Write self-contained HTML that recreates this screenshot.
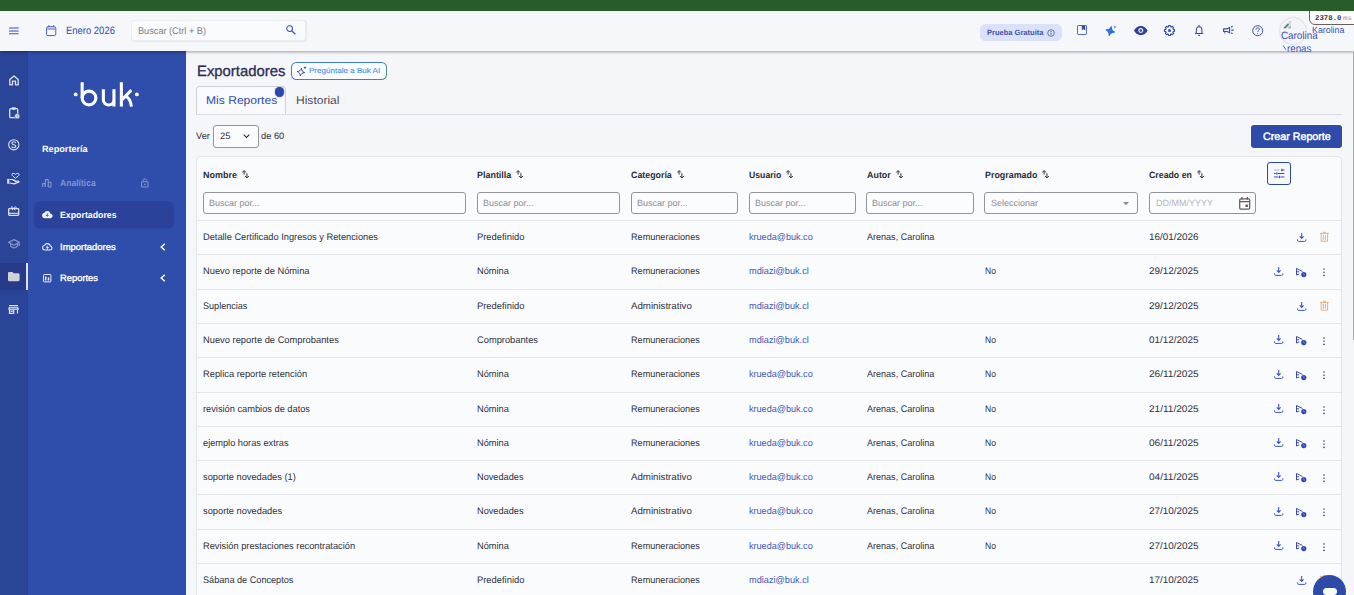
<!DOCTYPE html>
<html lang="es">
<head>
<meta charset="utf-8">
<title>Exportadores</title>
<style>
*{box-sizing:border-box;margin:0;padding:0}
html,body{width:1354px;height:595px;overflow:hidden;background:#f5f6f9;font-family:"Liberation Sans",sans-serif;}
body{position:relative;color:#2b2d42}
.abs{position:absolute}
svg{overflow:visible}
.t{position:absolute;white-space:nowrap;line-height:1;transform-origin:0 50%;z-index:8;text-rendering:geometricPrecision}
svg.abs{z-index:6}
#green{left:0;top:0;width:1354px;height:10.600px;background:#275c2b;z-index:7}
#hdr{left:0;top:10px;width:1354px;height:41px;background:#f6f7fa;box-shadow:0 1px 3px rgba(0,0,0,.38);z-index:5}
#strip{left:0;top:51px;width:28px;height:544px;background:#2a4497;border-right:1px solid #294295}
#stripact{left:0;top:263px;width:28px;height:27.400px;background:#263c8b;border-right:2px solid #e3e1de}
#menu{left:28px;top:51px;width:157.800px;height:544px;background:#2f4daa}
#act{left:34.300px;top:200.800px;width:139.700px;height:28.600px;border-radius:6px;background:#2a429a}
#search{left:131px;top:20px;width:174.600px;height:21.400px;border:1px solid #ecedf2;border-radius:3px;background:#f9fafc;box-shadow:0.500px 0.500px 0.800px rgba(0,0,0,.06);z-index:6}
#pill{left:980.100px;top:24px;width:82px;height:16.900px;border-radius:5.500px;background:#dae1f9;z-index:6}
#avatar{left:1279.800px;top:17.500px;width:26.600px;height:26.600px;border-radius:50%;background:#f4f5f9;box-shadow:0 0 2px rgba(0,0,0,.28);z-index:6}
#ms{left:1309.300px;top:9px;width:50px;height:15.900px;background:#fff;border:1px solid #6f5c5c;border-bottom-left-radius:6px;z-index:6}
#aibtn{left:291.100px;top:62px;width:95.800px;height:17.600px;border-radius:5.500px;background:linear-gradient(120deg,#3a7be0 0%,#3a7be0 82%,#4c9560 100%)}
#aibtn i{position:absolute;left:1px;top:1px;right:1px;bottom:1px;border-radius:4.600px;background:#fbfcff}
#tab{left:196px;top:86px;width:90px;height:29px;border:1px solid #cfd1d8;border-bottom:none;border-radius:4px 4px 0 0;background:#f9fafd}
#tabline{left:196px;top:113.800px;width:1146px;height:1px;background:#dcdee5}
#dot{left:274.900px;top:87.200px;width:9.400px;height:9.400px;border-radius:50%;background:#2c48a8;box-shadow:0 0 1.500px rgba(44,72,168,.6)}
#sel{left:213.400px;top:124.800px;width:45.400px;height:22.800px;border:1px solid #96979e;border-radius:3px;background:#fbfcfe}
#crear{left:1251px;top:124.800px;width:91px;height:23.300px;border-radius:3px;background:#2e4ba9;box-shadow:0 0 0 1px rgba(255,255,255,.75)}
#card{left:196px;top:156px;width:1146px;height:470px;border:1px solid #e4e5e9;border-radius:4.500px;background:#fafbfd}
#tune{left:1267.200px;top:162px;width:23.800px;height:22.800px;border:1.100px solid #2c48a8;border-radius:3px;background:#f6f7fb}
.hl{position:absolute;left:197px;width:1144px;height:1px;background:#e5e6ea}
.inp{position:absolute;top:192.200px;height:21.400px;border:1px solid #939499;border-radius:3px;background:#fbfcfe}
#chat{left:1313px;top:575px;width:33px;height:33px;border-radius:50%;background:#2e4ba9;z-index:9}
#thumb{left:1352.500px;top:52px;width:1.500px;height:288px;background:#a4a9a6;z-index:4}
#chatb{left:1323.100px;top:587.500px;width:13.600px;height:7px;border-radius:3.500px;background:#fff;z-index:10}
</style>
</head>
<body>
<div id="green" class="abs"></div>
<div id="strip" class="abs"></div>
<div id="stripact" class="abs"></div>
<div id="menu" class="abs"></div>
<div id="act" class="abs"></div>
<div id="hdr" class="abs"></div>
<div id="search" class="abs"></div>
<div id="pill" class="abs"></div>
<div id="avatar" class="abs"></div>
<div id="ms" class="abs"></div>
<div id="aibtn" class="abs"><i></i></div>
<div id="tab" class="abs"></div>
<div id="tabline" class="abs"></div>
<div id="dot" class="abs"></div>
<div id="sel" class="abs"></div>
<div id="crear" class="abs"></div>
<div id="card" class="abs"></div>
<div id="tune" class="abs"></div>
<div class="hl" style="top:220px"></div>
<div class="hl" style="top:254px"></div>
<div class="hl" style="top:289px"></div>
<div class="hl" style="top:323px"></div>
<div class="hl" style="top:357px"></div>
<div class="hl" style="top:392px"></div>
<div class="hl" style="top:426px"></div>
<div class="hl" style="top:460px"></div>
<div class="hl" style="top:494px"></div>
<div class="hl" style="top:529px"></div>
<div class="hl" style="top:563px"></div>

<div class="inp" style="left:203.2px;width:262.6px"></div>
<div class="inp" style="left:477px;width:142.8px"></div>
<div class="inp" style="left:631.2px;width:106.5px"></div>
<div class="inp" style="left:749.1px;width:106.7px"></div>
<div class="inp" style="left:866.3px;width:107.3px"></div>
<div class="inp" style="left:984.2px;width:153.5px"></div>
<div class="inp" style="left:1149.2px;width:106.5px"></div>

<svg class="abs" style="left:60px;top:70px" width="90" height="50" viewBox="60 70 90 50"><g fill="none" stroke="#fff" stroke-width="3.100"><path d="M82.150 82.200V98"/><circle cx="89" cy="98" r="6.850"/><path d="M103.350 89.200V99.750A5.300 5.300 0 0 0 113.950 99.750M113.950 89.200V106.600"/><path d="M121.350 82.200V106.600"/><path d="M122 99.800L131.300 90.100" stroke-width="3"/><path d="M125.600 96.300Q130.500 98 131.400 106.600" stroke-width="3"/></g><circle cx="75.700" cy="94.400" r="1.900" fill="#fff"/><circle cx="136.900" cy="94.400" r="1.900" fill="#fff"/></svg>
<svg class="abs" style="left:1283px;top:21.400px" width="8" height="7.600" viewBox="0 0 8 7.600"><path d="M0.300 7.300L5.600 1.200 7.600 0.400V7.300z" fill="#cfe0f3"/><path d="M0.300 7.300l4.600-5 1.200 1.200-3.600 3.800z" fill="#4a8a4f"/><path d="M5.200 7.300l2.400-2.400V7.300z" fill="#8c8c90"/><path d="M5.600 0.400h2v2" fill="none" stroke="#b6b8c0" stroke-width="0.500"/></svg>
<svg class="abs" style="left:1282px;top:44px" width="6" height="8" viewBox="0 0 6 8"><path d="M1.300 1.500L3.900 5.800" stroke="#3b55b3" stroke-width="0.900" fill="none"/></svg>
<span class="t" style="left:66.3px;top:26px;font-size:10.6px;font-weight:normal;color:#2f4daa;transform:scaleX(0.8926);">Enero 2026</span>
<span class="t" style="left:137.5px;top:27px;font-size:9.7px;font-weight:normal;color:#807e86;transform:scaleX(0.9461);">Buscar (Ctrl + B)</span>
<span class="t" style="left:986.8px;top:29px;font-size:7.6px;font-weight:bold;color:#3d55b0;transform:scaleX(0.9900);">Prueba Gratuita</span>
<span class="t" style="left:1311.7px;top:26px;font-size:9.1px;font-weight:normal;color:#3d58b0;transform:scaleX(0.9708);">Karolina</span>
<span class="t" style="left:1280.9px;top:31px;font-size:10.6px;font-weight:normal;color:#3b55b3;transform:scaleX(0.9277);">Carolina</span>
<span class="t" style="left:1286.8px;top:44px;font-size:10.6px;font-weight:normal;color:#3b55b3;transform:scaleX(0.9208);">renas</span>
<span class="t" style="left:1314.9px;top:16px;font-size:7.3px;font-weight:bold;color:#3a3436;transform:scaleX(1.0083);font-family:'Liberation Mono',monospace;">2378.0</span>
<span class="t" style="left:1343.1px;top:16px;font-size:6.6px;font-weight:normal;color:#9a9294;transform:scaleX(1.1235);font-family:'Liberation Mono',monospace;">ms</span>
<span class="t" style="left:41.7px;top:145px;font-size:9.2px;font-weight:bold;color:#ffffff;transform:scaleX(0.9945);">Reportería</span>
<span class="t" style="left:60.3px;top:179px;font-size:9.2px;font-weight:bold;color:#8294d2;transform:scaleX(0.9322);">Analítica</span>
<span class="t" style="left:60.3px;top:211px;font-size:9.2px;font-weight:bold;color:#ffffff;transform:scaleX(0.9555);">Exportadores</span>
<span class="t" style="left:60.3px;top:243px;font-size:9.2px;font-weight:normal;color:#ffffff;transform:scaleX(1.0288);-webkit-text-stroke:0.35px #fff;">Importadores</span>
<span class="t" style="left:60.3px;top:274px;font-size:9.2px;font-weight:normal;color:#ffffff;transform:scaleX(1.0193);-webkit-text-stroke:0.35px #fff;">Reportes</span>
<span class="t" style="left:196.8px;top:65px;font-size:14.9px;font-weight:normal;color:#2b2c56;transform:scaleX(0.9980);-webkit-text-stroke:0.3px #2b2c56;">Exportadores</span>
<span class="t" style="left:308.9px;top:67px;font-size:7.3px;font-weight:normal;color:#4a96ec;transform:scaleX(1.1039);-webkit-text-stroke:0.15px #4a96ec;">Pregúntale a Buk AI</span>
<span class="t" style="left:205.8px;top:96px;font-size:11.3px;font-weight:normal;color:#2f4daa;transform:scaleX(1.0699);">Mis Reportes</span>
<span class="t" style="left:295.7px;top:96px;font-size:11.3px;font-weight:normal;color:#4b4c57;transform:scaleX(1.0658);">Historial</span>
<span class="t" style="left:196.4px;top:131px;font-size:9.4px;font-weight:normal;color:#2f3140;transform:scaleX(0.9873);">Ver</span>
<span class="t" style="left:219.8px;top:131px;font-size:9.4px;font-weight:normal;color:#2f3140;transform:scaleX(1.0060);">25</span>
<span class="t" style="left:261.2px;top:131px;font-size:9.4px;font-weight:normal;color:#2f3140;transform:scaleX(0.9928);">de 60</span>
<span class="t" style="left:1263.1px;top:132px;font-size:10.8px;font-weight:normal;color:#ffffff;transform:scaleX(0.9909);-webkit-text-stroke:0.45px #fff;">Crear Reporte</span>
<span class="t" style="left:203.2px;top:171px;font-size:9.2px;font-weight:bold;color:#2b2d38;transform:scaleX(0.9764);">Nombre</span>
<span class="t" style="left:476.6px;top:171px;font-size:9.2px;font-weight:bold;color:#2b2d38;transform:scaleX(0.9735);">Plantilla</span>
<span class="t" style="left:631.3px;top:171px;font-size:9.2px;font-weight:bold;color:#2b2d38;transform:scaleX(0.9625);">Categoría</span>
<span class="t" style="left:749.1px;top:171px;font-size:9.2px;font-weight:bold;color:#2b2d38;transform:scaleX(0.9439);">Usuario</span>
<span class="t" style="left:867.0px;top:171px;font-size:9.2px;font-weight:bold;color:#2b2d38;transform:scaleX(0.9714);">Autor</span>
<span class="t" style="left:984.5px;top:171px;font-size:9.2px;font-weight:bold;color:#2b2d38;transform:scaleX(0.9681);">Programado</span>
<span class="t" style="left:1149.2px;top:171px;font-size:9.2px;font-weight:bold;color:#2b2d38;transform:scaleX(0.9547);">Creado en</span>
<span class="t" style="left:208.8px;top:199px;font-size:9.0px;font-weight:normal;color:#8c8a92;transform:scaleX(1.0014);">Buscar por...</span>
<span class="t" style="left:482.6px;top:199px;font-size:9.0px;font-weight:normal;color:#8c8a92;transform:scaleX(1.0014);">Buscar por...</span>
<span class="t" style="left:636.8px;top:199px;font-size:9.0px;font-weight:normal;color:#8c8a92;transform:scaleX(1.0014);">Buscar por...</span>
<span class="t" style="left:754.7px;top:199px;font-size:9.0px;font-weight:normal;color:#8c8a92;transform:scaleX(1.0014);">Buscar por...</span>
<span class="t" style="left:872.2px;top:199px;font-size:9.0px;font-weight:normal;color:#8c8a92;transform:scaleX(1.0014);">Buscar por...</span>
<span class="t" style="left:990.9px;top:199px;font-size:9.0px;font-weight:normal;color:#8c8a92;transform:scaleX(0.9972);">Seleccionar</span>
<span class="t" style="left:1155.8px;top:199px;font-size:9.0px;font-weight:normal;color:#b4b5bd;transform:scaleX(0.9980);">DD/MM/YYYY</span>
<span class="t" style="left:202.8px;top:233px;font-size:9.5px;font-weight:normal;color:#2f3140;transform:scaleX(0.9747);">Detalle Certificado Ingresos y Retenciones</span>
<span class="t" style="left:476.6px;top:233px;font-size:9.5px;font-weight:normal;color:#2f3140;transform:scaleX(0.9862);">Predefinido</span>
<span class="t" style="left:631.2px;top:233px;font-size:9.5px;font-weight:normal;color:#2f3140;transform:scaleX(0.9578);">Remuneraciones</span>
<span class="t" style="left:749.1px;top:233px;font-size:9.5px;font-weight:normal;color:#3d59b6;transform:scaleX(0.9552);">krueda@buk.co</span>
<span class="t" style="left:867.0px;top:233px;font-size:9.5px;font-weight:normal;color:#2f3140;transform:scaleX(0.9510);">Arenas, Carolina</span>
<span class="t" style="left:1149.2px;top:233px;font-size:9.5px;font-weight:normal;color:#2f3140;transform:scaleX(1.0432);">16/01/2026</span>
<span class="t" style="left:202.8px;top:267px;font-size:9.5px;font-weight:normal;color:#2f3140;transform:scaleX(0.9789);">Nuevo reporte de Nómina</span>
<span class="t" style="left:476.6px;top:267px;font-size:9.5px;font-weight:normal;color:#2f3140;transform:scaleX(0.9710);">Nómina</span>
<span class="t" style="left:631.2px;top:267px;font-size:9.5px;font-weight:normal;color:#2f3140;transform:scaleX(0.9578);">Remuneraciones</span>
<span class="t" style="left:749.1px;top:267px;font-size:9.5px;font-weight:normal;color:#3d59b6;transform:scaleX(0.9657);">mdiazi@buk.cl</span>
<span class="t" style="left:984.7px;top:267px;font-size:9.5px;font-weight:normal;color:#2f3140;transform:scaleX(0.8967);">No</span>
<span class="t" style="left:1149.2px;top:267px;font-size:9.5px;font-weight:normal;color:#2f3140;transform:scaleX(1.0432);">29/12/2025</span>
<span class="t" style="left:202.8px;top:302px;font-size:9.5px;font-weight:normal;color:#2f3140;transform:scaleX(0.9552);">Suplencias</span>
<span class="t" style="left:476.6px;top:302px;font-size:9.5px;font-weight:normal;color:#2f3140;transform:scaleX(0.9862);">Predefinido</span>
<span class="t" style="left:631.2px;top:302px;font-size:9.5px;font-weight:normal;color:#2f3140;transform:scaleX(1.0189);">Administrativo</span>
<span class="t" style="left:749.1px;top:302px;font-size:9.5px;font-weight:normal;color:#3d59b6;transform:scaleX(0.9657);">mdiazi@buk.cl</span>
<span class="t" style="left:1149.2px;top:302px;font-size:9.5px;font-weight:normal;color:#2f3140;transform:scaleX(1.0432);">29/12/2025</span>
<span class="t" style="left:202.8px;top:336px;font-size:9.5px;font-weight:normal;color:#2f3140;transform:scaleX(0.9815);">Nuevo reporte de Comprobantes</span>
<span class="t" style="left:476.6px;top:336px;font-size:9.5px;font-weight:normal;color:#2f3140;transform:scaleX(0.9789);">Comprobantes</span>
<span class="t" style="left:631.2px;top:336px;font-size:9.5px;font-weight:normal;color:#2f3140;transform:scaleX(0.9578);">Remuneraciones</span>
<span class="t" style="left:749.1px;top:336px;font-size:9.5px;font-weight:normal;color:#3d59b6;transform:scaleX(0.9657);">mdiazi@buk.cl</span>
<span class="t" style="left:984.7px;top:336px;font-size:9.5px;font-weight:normal;color:#2f3140;transform:scaleX(0.8967);">No</span>
<span class="t" style="left:1149.2px;top:336px;font-size:9.5px;font-weight:normal;color:#2f3140;transform:scaleX(1.0432);">01/12/2025</span>
<span class="t" style="left:202.8px;top:370px;font-size:9.5px;font-weight:normal;color:#2f3140;transform:scaleX(0.9806);">Replica reporte retención</span>
<span class="t" style="left:476.6px;top:370px;font-size:9.5px;font-weight:normal;color:#2f3140;transform:scaleX(0.9710);">Nómina</span>
<span class="t" style="left:631.2px;top:370px;font-size:9.5px;font-weight:normal;color:#2f3140;transform:scaleX(0.9578);">Remuneraciones</span>
<span class="t" style="left:749.1px;top:370px;font-size:9.5px;font-weight:normal;color:#3d59b6;transform:scaleX(0.9552);">krueda@buk.co</span>
<span class="t" style="left:867.0px;top:370px;font-size:9.5px;font-weight:normal;color:#2f3140;transform:scaleX(0.9510);">Arenas, Carolina</span>
<span class="t" style="left:984.7px;top:370px;font-size:9.5px;font-weight:normal;color:#2f3140;transform:scaleX(0.8967);">No</span>
<span class="t" style="left:1149.2px;top:370px;font-size:9.5px;font-weight:normal;color:#2f3140;transform:scaleX(1.0588);">26/11/2025</span>
<span class="t" style="left:202.8px;top:405px;font-size:9.5px;font-weight:normal;color:#2f3140;transform:scaleX(0.9741);">revisión cambios de datos</span>
<span class="t" style="left:476.6px;top:405px;font-size:9.5px;font-weight:normal;color:#2f3140;transform:scaleX(0.9710);">Nómina</span>
<span class="t" style="left:631.2px;top:405px;font-size:9.5px;font-weight:normal;color:#2f3140;transform:scaleX(0.9578);">Remuneraciones</span>
<span class="t" style="left:749.1px;top:405px;font-size:9.5px;font-weight:normal;color:#3d59b6;transform:scaleX(0.9552);">krueda@buk.co</span>
<span class="t" style="left:867.0px;top:405px;font-size:9.5px;font-weight:normal;color:#2f3140;transform:scaleX(0.9510);">Arenas, Carolina</span>
<span class="t" style="left:984.7px;top:405px;font-size:9.5px;font-weight:normal;color:#2f3140;transform:scaleX(0.8967);">No</span>
<span class="t" style="left:1149.2px;top:405px;font-size:9.5px;font-weight:normal;color:#2f3140;transform:scaleX(1.0588);">21/11/2025</span>
<span class="t" style="left:202.8px;top:439px;font-size:9.5px;font-weight:normal;color:#2f3140;transform:scaleX(0.9707);">ejemplo horas extras</span>
<span class="t" style="left:476.6px;top:439px;font-size:9.5px;font-weight:normal;color:#2f3140;transform:scaleX(0.9710);">Nómina</span>
<span class="t" style="left:631.2px;top:439px;font-size:9.5px;font-weight:normal;color:#2f3140;transform:scaleX(0.9578);">Remuneraciones</span>
<span class="t" style="left:749.1px;top:439px;font-size:9.5px;font-weight:normal;color:#3d59b6;transform:scaleX(0.9552);">krueda@buk.co</span>
<span class="t" style="left:867.0px;top:439px;font-size:9.5px;font-weight:normal;color:#2f3140;transform:scaleX(0.9510);">Arenas, Carolina</span>
<span class="t" style="left:984.7px;top:439px;font-size:9.5px;font-weight:normal;color:#2f3140;transform:scaleX(0.8967);">No</span>
<span class="t" style="left:1149.2px;top:439px;font-size:9.5px;font-weight:normal;color:#2f3140;transform:scaleX(1.0588);">06/11/2025</span>
<span class="t" style="left:202.8px;top:473px;font-size:9.5px;font-weight:normal;color:#2f3140;transform:scaleX(0.9762);">soporte novedades (1)</span>
<span class="t" style="left:476.6px;top:473px;font-size:9.5px;font-weight:normal;color:#2f3140;transform:scaleX(0.9675);">Novedades</span>
<span class="t" style="left:631.2px;top:473px;font-size:9.5px;font-weight:normal;color:#2f3140;transform:scaleX(1.0189);">Administrativo</span>
<span class="t" style="left:749.1px;top:473px;font-size:9.5px;font-weight:normal;color:#3d59b6;transform:scaleX(0.9552);">krueda@buk.co</span>
<span class="t" style="left:867.0px;top:473px;font-size:9.5px;font-weight:normal;color:#2f3140;transform:scaleX(0.9510);">Arenas, Carolina</span>
<span class="t" style="left:984.7px;top:473px;font-size:9.5px;font-weight:normal;color:#2f3140;transform:scaleX(0.8967);">No</span>
<span class="t" style="left:1149.2px;top:473px;font-size:9.5px;font-weight:normal;color:#2f3140;transform:scaleX(1.0588);">04/11/2025</span>
<span class="t" style="left:202.8px;top:507px;font-size:9.5px;font-weight:normal;color:#2f3140;transform:scaleX(0.9788);">soporte novedades</span>
<span class="t" style="left:476.6px;top:507px;font-size:9.5px;font-weight:normal;color:#2f3140;transform:scaleX(0.9675);">Novedades</span>
<span class="t" style="left:631.2px;top:507px;font-size:9.5px;font-weight:normal;color:#2f3140;transform:scaleX(1.0189);">Administrativo</span>
<span class="t" style="left:749.1px;top:507px;font-size:9.5px;font-weight:normal;color:#3d59b6;transform:scaleX(0.9552);">krueda@buk.co</span>
<span class="t" style="left:867.0px;top:507px;font-size:9.5px;font-weight:normal;color:#2f3140;transform:scaleX(0.9510);">Arenas, Carolina</span>
<span class="t" style="left:984.7px;top:507px;font-size:9.5px;font-weight:normal;color:#2f3140;transform:scaleX(0.8967);">No</span>
<span class="t" style="left:1149.2px;top:507px;font-size:9.5px;font-weight:normal;color:#2f3140;transform:scaleX(1.0432);">27/10/2025</span>
<span class="t" style="left:202.8px;top:542px;font-size:9.5px;font-weight:normal;color:#2f3140;transform:scaleX(0.9764);">Revisión prestaciones recontratación</span>
<span class="t" style="left:476.6px;top:542px;font-size:9.5px;font-weight:normal;color:#2f3140;transform:scaleX(0.9710);">Nómina</span>
<span class="t" style="left:631.2px;top:542px;font-size:9.5px;font-weight:normal;color:#2f3140;transform:scaleX(0.9578);">Remuneraciones</span>
<span class="t" style="left:749.1px;top:542px;font-size:9.5px;font-weight:normal;color:#3d59b6;transform:scaleX(0.9552);">krueda@buk.co</span>
<span class="t" style="left:867.0px;top:542px;font-size:9.5px;font-weight:normal;color:#2f3140;transform:scaleX(0.9510);">Arenas, Carolina</span>
<span class="t" style="left:984.7px;top:542px;font-size:9.5px;font-weight:normal;color:#2f3140;transform:scaleX(0.8967);">No</span>
<span class="t" style="left:1149.2px;top:542px;font-size:9.5px;font-weight:normal;color:#2f3140;transform:scaleX(1.0432);">27/10/2025</span>
<span class="t" style="left:202.8px;top:576px;font-size:9.5px;font-weight:normal;color:#2f3140;transform:scaleX(0.9614);">Sábana de Conceptos</span>
<span class="t" style="left:476.6px;top:576px;font-size:9.5px;font-weight:normal;color:#2f3140;transform:scaleX(0.9862);">Predefinido</span>
<span class="t" style="left:631.2px;top:576px;font-size:9.5px;font-weight:normal;color:#2f3140;transform:scaleX(0.9578);">Remuneraciones</span>
<span class="t" style="left:749.1px;top:576px;font-size:9.5px;font-weight:normal;color:#3d59b6;transform:scaleX(0.9657);">mdiazi@buk.cl</span>
<span class="t" style="left:1149.2px;top:576px;font-size:9.5px;font-weight:normal;color:#2f3140;transform:scaleX(1.0432);">17/10/2025</span>

<svg class="abs" style="left:8.9px;top:26.5px;" width="9.6" height="8" viewBox="0 0 9.600 8"><path d="M0 1h9.600M0 4h9.600" stroke="#2f4daa" stroke-width="1" fill="none"/><path d="M0 6.700h9.600" stroke="#5c72bd" stroke-width="1.200" fill="none"/></svg>
<svg class="abs" style="left:45.8px;top:24.8px;" width="10.4" height="11.2" viewBox="0 0 10.400 11.200"><rect x="0.600" y="1.700" width="9.200" height="8.900" rx="1.400" fill="none" stroke="#4560b6" stroke-width="1"/><rect x="1.200" y="2.600" width="8" height="2.400" fill="#a3abd0"/><path d="M2.800 0.200v1.800M7.600 0.200v1.800" stroke="#4560b6" stroke-width="1"/></svg>
<svg class="abs" style="left:285.6px;top:25.4px;" width="10" height="10" viewBox="0 0 10 10"><circle cx="3.600" cy="3.600" r="2.900" fill="none" stroke="#3654bf" stroke-width="1.050"/><path d="M5.700 5.800l3.700 3.400" stroke="#3654bf" stroke-width="1.200"/></svg>
<svg class="abs" style="left:1046.6px;top:28.6px;" width="8" height="8" viewBox="0 0 8 8"><circle cx="4" cy="4" r="3.3" fill="none" stroke="#3d57ae" stroke-width="0.8"/><path d="M4 3.6v2.2" stroke="#3d57ae" stroke-width="0.9"/><circle cx="4" cy="2.4" r="0.5" fill="#3d57ae"/></svg>
<svg class="abs" style="left:1076.8px;top:25.2px;" width="10" height="10" viewBox="0 0 10 10"><rect x="0.500" y="0.500" width="9" height="9" rx="0.700" fill="none" stroke="#3d59b4" stroke-width="0.900"/><path d="M4.800 0.500h3.400v4.800l-1.700-1.100-1.700 1.100z" fill="#3350ad"/></svg>
<svg class="abs" style="left:1105.6px;top:25.4px;" width="11" height="11" viewBox="0 0 11 11"><path d="M4.300 1.800c.4 2.600 1.400 3.700 4.200 4.200-2.800.500-3.800 1.600-4.200 4.400-.5-2.800-1.400-3.900-4.200-4.400C2.900 5.500 3.800 4.400 4.300 1.800z" fill="#2f6ee0" stroke="#2f6ee0" stroke-width="1.300" stroke-linejoin="round" transform="rotate(14 4.300 6)"/><path d="M8.900 0.300c.2 1.200.6 1.600 1.700 1.800-1.100.200-1.500.600-1.700 1.800-.2-1.200-.6-1.600-1.700-1.800 1.100-.2 1.500-.6 1.700-1.800z" fill="#3f86ea"/></svg>
<svg class="abs" style="left:1133.7px;top:26.4px;" width="13.6" height="9.2" viewBox="0 0 13.6 9.2"><path d="M0 4.600C1.500 1.700 3.900 0 6.800 0s5.300 1.700 6.800 4.600C12.100 7.500 9.700 9.200 6.800 9.200S1.500 7.500 0 4.600z" fill="#2a409b"/><circle cx="6.800" cy="4.600" r="2.500" fill="#f6f7fa"/><circle cx="6.800" cy="4.600" r="1.300" fill="#2a409b"/></svg>
<svg class="abs" style="left:1164px;top:25px;" width="11" height="11" viewBox="0 0 11 11"><path d="M4.35 1.77L4.64 0.47L6.36 0.47L6.65 1.77L7.32 2.05L8.44 1.34L9.66 2.56L8.95 3.68L9.23 4.35L10.53 4.64L10.53 6.36L9.23 6.65L8.95 7.32L9.66 8.44L8.44 9.66L7.32 8.95L6.65 9.23L6.36 10.53L4.64 10.53L4.35 9.23L3.68 8.95L2.56 9.66L1.34 8.44L2.05 7.32L1.77 6.65L0.47 6.36L0.47 4.64L1.77 4.35L2.05 3.68L1.34 2.56L2.56 1.34L3.68 2.05z" fill="none" stroke="#2f4daa" stroke-width="1.150" stroke-linejoin="round"/><circle cx="5.500" cy="5.500" r="1.500" fill="#2f4daa"/></svg>
<svg class="abs" style="left:1194.9px;top:24.9px;" width="8.2" height="11.2" viewBox="0 0 8.200 11.200"><path d="M1.300 8.300V5c0-1.900 1.200-3.200 2.800-3.200S6.900 3.100 6.900 5v3.300" fill="none" stroke="#2f4daa" stroke-width="1.050"/><path d="M0 8.500h8.200" stroke="#2f4daa" stroke-width="1.050"/><path d="M4.100 0v1.600" stroke="#2f4daa" stroke-width="1.050"/><path d="M3.200 9.800h1.800v.4a.9.9 0 0 1-1.800 0z" fill="#2f4daa"/></svg>
<svg class="abs" style="left:1222.7px;top:27.4px;" width="11" height="7" viewBox="0 0 11 7"><path d="M0.600 1.900h3.500l2.500-1.300v5.200l-2.500-1.300H0.600z" fill="none" stroke="#2f4daa" stroke-width="1.100" stroke-linejoin="round"/><path d="M1.700 4.900v1.600" stroke="#7d8ac0" stroke-width="1.300"/><path d="M7.900 0.200L9.700 -0.900M8.300 3.100h2.400M7.900 6l1.800 0.500" stroke="#2f4daa" stroke-width="1.100"/></svg>
<svg class="abs" style="left:1252px;top:24.8px;" width="11.4" height="11.4" viewBox="0 0 11.400 11.400"><circle cx="5.700" cy="5.700" r="5" fill="none" stroke="#2f4daa" stroke-width="1"/><path d="M4 4.500c0-1 .7-1.700 1.700-1.700s1.700.6 1.700 1.500c0 1.200-1.600 1.300-1.600 2.600" fill="none" stroke="#2f4daa" stroke-width="1"/><circle cx="5.700" cy="8.500" r="0.600" fill="#2f4daa"/></svg>
<svg class="abs" style="left:8.5px;top:75.25px;opacity:1;" width="10" height="10.5" viewBox="0 0 10 10.500"><path d="M0.800 4.600L5 0.900l4.200 3.700V9.800H6.500V6.200h-3v3.600H0.800z" fill="none" stroke="#e2e3ec" stroke-width="1.300" stroke-linejoin="round"/></svg>
<svg class="abs" style="left:8.9px;top:107.0px;opacity:1;" width="11" height="12" viewBox="0 0 11 12"><rect x="0.700" y="1.700" width="8" height="9" rx="1" fill="none" stroke="#e2e3ec" stroke-width="1.300"/><rect x="2.700" y="0.300" width="4" height="2.400" rx="0.600" fill="#e2e3ec"/><circle cx="8.200" cy="9.200" r="2.600" fill="#e2e3ec" stroke="#2a4497" stroke-width="0.600"/><path d="M8.200 8v1.300l.8.500" stroke="#2a4497" stroke-width="0.500" fill="none"/></svg>
<svg class="abs" style="left:7.8px;top:139.39999999999998px;opacity:1;" width="11.6" height="11.6" viewBox="0 0 11.600 11.600"><circle cx="5.800" cy="5.800" r="5.100" fill="none" stroke="#e2e3ec" stroke-width="1.100"/><path d="M7.700 4.100c-.3-.9-1-1.300-1.900-1.300-1.100 0-1.900.6-1.900 1.500 0 2.100 3.900 .9 3.900 3 0 .9-.8 1.500-2 1.500-1.100 0-1.900-.5-2.100-1.400" fill="none" stroke="#e2e3ec" stroke-width="1.100"/></svg>
<svg class="abs" style="left:7.3999999999999995px;top:172.8px;opacity:1;" width="12.4" height="11.4" viewBox="0 0 12.400 11.400"><path d="M8.500 5.200C6.500 3.600 4.900 2.700 4.900 1.600 4.900 .2 6.900-.2 8.500 1.400 10.100-.2 12.100 .2 12.100 1.600c0 1.100-1.600 2-3.600 3.600z" fill="none" stroke="#e2e3ec" stroke-width="1"/><rect x="0.200" y="5.900" width="2.100" height="4.800" fill="#e2e3ec"/><path d="M2.600 6.500h3l2.600 1h-2.400M2.600 10l4.600 .9 5-2c-.4-.9-1.300-1-2-.8l-2.600 .7" fill="none" stroke="#e2e3ec" stroke-width="1.200" stroke-linejoin="round"/></svg>
<svg class="abs" style="left:8.100000000000001px;top:206.2px;opacity:1;" width="11.4" height="10" viewBox="0 0 11.400 10"><rect x="0.700" y="2.700" width="10" height="6.600" rx="0.800" fill="none" stroke="#e2e3ec" stroke-width="1.300"/><path d="M0.700 7.300h10" stroke="#e2e3ec" stroke-width="1.100"/><path d="M5.700 2.600C4.600 .2 2.600 .4 3.300 1.900M5.700 2.600C6.800 .2 8.800 .4 8.100 1.900M4 4.200l1.700-1.600 1.700 1.600" fill="none" stroke="#e2e3ec" stroke-width="1"/></svg>
<svg class="abs" style="left:7.699999999999999px;top:238.5px;opacity:0.5;" width="12" height="9.6" viewBox="0 0 12 9.600"><path d="M6 0.600l5.400 2.800L6 6.200 0.600 3.400z" fill="none" stroke="#e2e3ec" stroke-width="1.200" stroke-linejoin="round"/><path d="M2.600 4.800v2.400C3.600 8.400 4.800 8.900 6 8.900s2.400-.5 3.400-1.700V4.800" fill="none" stroke="#e2e3ec" stroke-width="1.200"/><path d="M11.200 3.400v3.600" stroke="#e2e3ec" stroke-width="1.300"/></svg>
<svg class="abs" style="left:7.7px;top:271.7px;opacity:1;" width="11.6" height="9.2" viewBox="0 0 11.600 9.200"><path d="M1.200 0h3.200l1.200 1.300h4.800c.7 0 1.200.5 1.200 1.200V8c0 .7-.5 1.200-1.200 1.200H1.200C.500 9.200 0 8.700 0 8V1.200C0 .500.500 0 1.200 0z" fill="#d0d0d6"/></svg>
<svg class="abs" style="left:8.0px;top:305.0px;opacity:1;" width="11" height="9" viewBox="0 0 11 9"><path d="M1 0.600h9" stroke="#e2e3ec" stroke-width="1.100"/><path d="M0.600 4.100L1.400 2.200h8.200l.8 1.900z" fill="none" stroke="#e2e3ec" stroke-width="1.100" stroke-linejoin="round"/><path d="M1.500 4.300v4.100h4.200V4.300M9.500 4.300v4.300" fill="none" stroke="#e2e3ec" stroke-width="1.200"/><rect x="2.500" y="5.500" width="2.200" height="1.500" fill="#e2e3ec"/></svg>
<svg class="abs" style="left:42.300000000000004px;top:178.6px;opacity:1;" width="9.6" height="8.6" viewBox="0 0 9.600 8.600"><path d="M0.600 8V4.600h2.600V8M3.400 8V0.600h2.800V8M6.400 8V3.200h2.600V8z" fill="none" stroke="#8294d2" stroke-width="1.100" stroke-linejoin="round"/></svg>
<svg class="abs" style="left:141.39999999999998px;top:178.1px;opacity:1;" width="7.6" height="9.6" viewBox="0 0 7.600 9.600"><rect x="0.600" y="3.800" width="6.400" height="5.200" rx="0.800" fill="none" stroke="#8294d2" stroke-width="1.100"/><path d="M2.200 3.800V2.400a1.600 1.600 0 0 1 3.200 0v1.400" fill="none" stroke="#8294d2" stroke-width="1"/><circle cx="3.800" cy="6.400" r="0.800" fill="#8294d2"/></svg>
<svg class="abs" style="left:41.800000000000004px;top:211.0px;opacity:1;" width="10.6" height="7.2" viewBox="0 0 10.600 7.200"><path d="M8.500 2.800C8.200 1.200 6.900 0 5.300 0 4 0 2.900.700 2.400 1.800 1 2 0 3.100 0 4.400 0 5.900 1.200 7.200 2.700 7.200h5.700c1.200 0 2.200-1 2.200-2.200 0-1.200-.9-2.100-2.100-2.200z" fill="#eef0fa"/><path d="M5.300 2.400v2.600M4 4l1.300 1.400L6.600 4" stroke="#2a409a" stroke-width="0.800" fill="none"/></svg>
<svg class="abs" style="left:41.800000000000004px;top:242.79999999999998px;opacity:1;" width="10.6" height="7.6" viewBox="0 0 10.600 7.600"><path d="M8.300 3C8 1.600 6.800 0.600 5.300 0.600 4.100 0.600 3.100 1.300 2.600 2.300 1.400 2.500.600 3.500.600 4.600.600 5.900 1.700 7 3 7h5.200c1 0 1.800-.800 1.800-1.900S9.300 3.100 8.300 3z" fill="none" stroke="#eef0fa" stroke-width="1.100"/><path d="M5.300 6.600V3.600M3.900 4.800l1.400-1.400 1.400 1.400" stroke="#eef0fa" stroke-width="1" fill="none"/></svg>
<svg class="abs" style="left:42.9px;top:273.7px;opacity:1;" width="8.4" height="8.4" viewBox="0 0 8.400 8.400"><rect x="0.500" y="0.500" width="7.400" height="7.400" rx="0.800" fill="none" stroke="#eef0fa" stroke-width="1"/><path d="M2.700 6.600V2.400M5.500 6.600V3.400" stroke="#eef0fa" stroke-width="1.500"/></svg>
<svg class="abs" style="left:159.89999999999998px;top:243.4px;opacity:1;" width="5.6" height="8" viewBox="0 0 5.600 8"><path d="M4.800 0.700L1.200 4l3.600 3.300" fill="none" stroke="#ffffff" stroke-width="1.500"/></svg>
<svg class="abs" style="left:159.89999999999998px;top:274.3px;opacity:1;" width="5.6" height="8" viewBox="0 0 5.600 8"><path d="M4.800 0.700L1.200 4l3.600 3.300" fill="none" stroke="#ffffff" stroke-width="1.500"/></svg>
<svg class="abs" style="left:296.7px;top:66.2px;" width="9.8" height="10.2" viewBox="0 0 9.800 10.200"><path d="M3.900 2.200c.5 2.400 1.400 3.300 3.800 3.900-2.400.6-3.300 1.500-3.800 3.900-.5-2.400-1.400-3.300-3.800-3.900 2.400-.6 3.300-1.500 3.800-3.900z" fill="none" stroke="#2b3a8c" stroke-width="0.900" stroke-linejoin="round" transform="rotate(8 3.900 6.100)"/><path d="M8 0.100c.2 1 .6 1.400 1.600 1.600-1 .2-1.400.6-1.600 1.600-.2-1-.6-1.400-1.600-1.600 1-.2 1.400-.6 1.600-1.600z" fill="#2b3a8c"/></svg>
<svg class="abs" style="left:242.6px;top:134.2px;" width="7" height="4.6" viewBox="0 0 7 4.600"><path d="M0.700 0.700l2.800 2.800 2.800-2.800" fill="none" stroke="#2f3140" stroke-width="1.100"/></svg>
<svg class="abs" style="left:241.79999999999998px;top:170.4px;" width="7.6" height="8.4" viewBox="0 0 7.600 8.400"><path d="M2.100 4.600V0.800M0.300 2.500L2.100 0.600 3.900 2.500" fill="none" stroke="#30313a" stroke-width="1"/><path d="M4.900 3.300V7.800M2.900 6L4.900 8 6.900 6" fill="none" stroke="#30313a" stroke-width="1"/></svg>
<svg class="abs" style="left:516.0px;top:170.4px;" width="7.6" height="8.4" viewBox="0 0 7.600 8.400"><path d="M2.100 4.600V0.800M0.300 2.500L2.100 0.600 3.900 2.500" fill="none" stroke="#30313a" stroke-width="1"/><path d="M4.900 3.300V7.800M2.900 6L4.900 8 6.900 6" fill="none" stroke="#30313a" stroke-width="1"/></svg>
<svg class="abs" style="left:677.0px;top:170.4px;" width="7.6" height="8.4" viewBox="0 0 7.600 8.400"><path d="M2.100 4.600V0.800M0.300 2.500L2.100 0.600 3.900 2.500" fill="none" stroke="#30313a" stroke-width="1"/><path d="M4.900 3.300V7.800M2.900 6L4.900 8 6.900 6" fill="none" stroke="#30313a" stroke-width="1"/></svg>
<svg class="abs" style="left:786.4000000000001px;top:170.4px;" width="7.6" height="8.4" viewBox="0 0 7.600 8.400"><path d="M2.100 4.600V0.800M0.300 2.500L2.100 0.600 3.900 2.500" fill="none" stroke="#30313a" stroke-width="1"/><path d="M4.900 3.300V7.800M2.900 6L4.900 8 6.900 6" fill="none" stroke="#30313a" stroke-width="1"/></svg>
<svg class="abs" style="left:895.9000000000001px;top:170.4px;" width="7.6" height="8.4" viewBox="0 0 7.600 8.400"><path d="M2.100 4.600V0.800M0.300 2.500L2.100 0.600 3.900 2.500" fill="none" stroke="#30313a" stroke-width="1"/><path d="M4.900 3.300V7.800M2.900 6L4.900 8 6.900 6" fill="none" stroke="#30313a" stroke-width="1"/></svg>
<svg class="abs" style="left:1042.4px;top:170.4px;" width="7.6" height="8.4" viewBox="0 0 7.600 8.400"><path d="M2.100 4.600V0.800M0.300 2.500L2.100 0.600 3.900 2.500" fill="none" stroke="#30313a" stroke-width="1"/><path d="M4.900 3.300V7.800M2.900 6L4.900 8 6.900 6" fill="none" stroke="#30313a" stroke-width="1"/></svg>
<svg class="abs" style="left:1197.2px;top:170.4px;" width="7.6" height="8.4" viewBox="0 0 7.600 8.400"><path d="M2.100 4.600V0.800M0.300 2.500L2.100 0.600 3.900 2.500" fill="none" stroke="#30313a" stroke-width="1"/><path d="M4.900 3.300V7.800M2.900 6L4.900 8 6.900 6" fill="none" stroke="#30313a" stroke-width="1"/></svg>
<svg class="abs" style="left:1273.8px;top:168.5px;" width="10.4" height="9.5" viewBox="0 0 10.400 9.500"><path d="M0 1h5.400" stroke="#a9b3e0" stroke-width="1"/><path d="M7.500 1h2.900M0 4.500h1.800M3.700 4.500h6.700M0 8h4.300M6.400 8h4" stroke="#2f4daa" stroke-width="1"/><path d="M7.900 -0.200v2.400M2.900 3.300v2.400M5.400 6.800v2.400" stroke="#2f4daa" stroke-width="1.100"/></svg>
<svg class="abs" style="left:1123px;top:201.6px;" width="6" height="3.2" viewBox="0 0 6 3.200"><path d="M0 0h6L3 3.200z" fill="#8a8c96"/></svg>
<svg class="abs" style="left:1238.9px;top:196.6px;" width="11.4" height="12.8" viewBox="0 0 11.400 12.800"><rect x="0.700" y="1.900" width="10" height="10.200" rx="1" fill="none" stroke="#635a5a" stroke-width="1.250"/><path d="M0.700 4.700h10M3 0.100v2.400M8.400 0.100v2.400" stroke="#635a5a" stroke-width="1.200"/><rect x="6.500" y="7.600" width="2.500" height="2.500" rx="0.700" fill="#635a5a"/></svg>
<svg class="abs" style="left:1297.4px;top:232.9px;" width="9.4" height="9" viewBox="0 0 9.400 9"><path d="M4.700 0v5.300M2.800 3.400l1.900 2 1.900-2" fill="none" stroke="#3a55c4" stroke-width="1.100"/><path d="M0.500 6.400v0.800c0 .800.500 1.200 1.300 1.200h5.800c.800 0 1.300-.400 1.300-1.200v-0.800" fill="none" stroke="#3a55c4" stroke-width="1"/></svg>
<svg class="abs" style="left:1320.1px;top:232.10000000000002px;" width="8.8" height="9.8" viewBox="0 0 8.800 9.800"><path d="M0 1.400h8.800M3 0.400h2.800" stroke="#f0a566" stroke-width="0.900"/><path d="M1.200 1.600v7.600h6.400V1.600" fill="none" stroke="#f0a566" stroke-width="0.900"/><path d="M3.400 3v4.800M5.400 3v4.800" stroke="#f0a566" stroke-width="0.900"/></svg>
<svg class="abs" style="left:1273.6px;top:266.79999999999995px;" width="9.4" height="9" viewBox="0 0 9.400 9"><path d="M4.700 0v5.300M2.800 3.400l1.900 2 1.900-2" fill="none" stroke="#3a55c4" stroke-width="1.100"/><path d="M0.500 6.400v0.800c0 .800.500 1.200 1.300 1.200h5.800c.800 0 1.300-.400 1.300-1.200v-0.800" fill="none" stroke="#3a55c4" stroke-width="1"/></svg>
<svg class="abs" style="left:1296px;top:267.6px;" width="10.4" height="9.2" viewBox="0 0 10.400 9.200"><path d="M0.500 7V0.500l6 3M0.500 3.800h2.600M0.500 7l2.800-1" fill="none" stroke="#2c3a94" stroke-width="0.900" stroke-linejoin="round"/><circle cx="7.800" cy="6.600" r="2.600" fill="#2c48b0"/><path d="M7.800 5.200v1.500l.9.500" stroke="#cfd6f3" stroke-width="0.500" fill="none"/></svg>
<svg class="abs" style="left:1323px;top:268.0px;" width="2" height="8.4" viewBox="0 0 2 8.400"><circle cx="1" cy="1" r="0.800" fill="#2c3a94"/><circle cx="1" cy="4.200" r="0.800" fill="#2c3a94"/><circle cx="1" cy="7.400" r="0.800" fill="#2c3a94"/></svg>
<svg class="abs" style="left:1297.4px;top:301.9px;" width="9.4" height="9" viewBox="0 0 9.400 9"><path d="M4.700 0v5.300M2.800 3.400l1.900 2 1.900-2" fill="none" stroke="#3a55c4" stroke-width="1.100"/><path d="M0.500 6.400v0.800c0 .800.500 1.200 1.300 1.200h5.800c.800 0 1.300-.400 1.300-1.200v-0.800" fill="none" stroke="#3a55c4" stroke-width="1"/></svg>
<svg class="abs" style="left:1320.1px;top:301.1px;" width="8.8" height="9.8" viewBox="0 0 8.800 9.800"><path d="M0 1.400h8.800M3 0.400h2.800" stroke="#f0a566" stroke-width="0.900"/><path d="M1.200 1.600v7.600h6.400V1.600" fill="none" stroke="#f0a566" stroke-width="0.900"/><path d="M3.400 3v4.800M5.400 3v4.800" stroke="#f0a566" stroke-width="0.900"/></svg>
<svg class="abs" style="left:1273.6px;top:335.29999999999995px;" width="9.4" height="9" viewBox="0 0 9.400 9"><path d="M4.700 0v5.300M2.800 3.400l1.900 2 1.900-2" fill="none" stroke="#3a55c4" stroke-width="1.100"/><path d="M0.500 6.400v0.800c0 .800.500 1.200 1.300 1.200h5.800c.800 0 1.300-.400 1.300-1.200v-0.800" fill="none" stroke="#3a55c4" stroke-width="1"/></svg>
<svg class="abs" style="left:1296px;top:336.1px;" width="10.4" height="9.2" viewBox="0 0 10.400 9.200"><path d="M0.500 7V0.500l6 3M0.500 3.800h2.600M0.500 7l2.800-1" fill="none" stroke="#2c3a94" stroke-width="0.900" stroke-linejoin="round"/><circle cx="7.800" cy="6.600" r="2.600" fill="#2c48b0"/><path d="M7.800 5.200v1.500l.9.500" stroke="#cfd6f3" stroke-width="0.500" fill="none"/></svg>
<svg class="abs" style="left:1323px;top:336.5px;" width="2" height="8.4" viewBox="0 0 2 8.400"><circle cx="1" cy="1" r="0.800" fill="#2c3a94"/><circle cx="1" cy="4.200" r="0.800" fill="#2c3a94"/><circle cx="1" cy="7.400" r="0.800" fill="#2c3a94"/></svg>
<svg class="abs" style="left:1273.6px;top:369.79999999999995px;" width="9.4" height="9" viewBox="0 0 9.400 9"><path d="M4.700 0v5.300M2.800 3.400l1.900 2 1.900-2" fill="none" stroke="#3a55c4" stroke-width="1.100"/><path d="M0.500 6.400v0.800c0 .800.500 1.200 1.300 1.200h5.800c.800 0 1.300-.400 1.300-1.200v-0.800" fill="none" stroke="#3a55c4" stroke-width="1"/></svg>
<svg class="abs" style="left:1296px;top:370.6px;" width="10.4" height="9.2" viewBox="0 0 10.400 9.200"><path d="M0.500 7V0.500l6 3M0.500 3.800h2.600M0.500 7l2.800-1" fill="none" stroke="#2c3a94" stroke-width="0.900" stroke-linejoin="round"/><circle cx="7.800" cy="6.600" r="2.600" fill="#2c48b0"/><path d="M7.800 5.200v1.500l.9.500" stroke="#cfd6f3" stroke-width="0.500" fill="none"/></svg>
<svg class="abs" style="left:1323px;top:371.0px;" width="2" height="8.4" viewBox="0 0 2 8.400"><circle cx="1" cy="1" r="0.800" fill="#2c3a94"/><circle cx="1" cy="4.200" r="0.800" fill="#2c3a94"/><circle cx="1" cy="7.400" r="0.800" fill="#2c3a94"/></svg>
<svg class="abs" style="left:1273.6px;top:404.29999999999995px;" width="9.4" height="9" viewBox="0 0 9.400 9"><path d="M4.700 0v5.300M2.800 3.400l1.900 2 1.900-2" fill="none" stroke="#3a55c4" stroke-width="1.100"/><path d="M0.500 6.400v0.800c0 .800.500 1.200 1.300 1.200h5.800c.800 0 1.300-.400 1.300-1.200v-0.800" fill="none" stroke="#3a55c4" stroke-width="1"/></svg>
<svg class="abs" style="left:1296px;top:405.1px;" width="10.4" height="9.2" viewBox="0 0 10.400 9.200"><path d="M0.500 7V0.500l6 3M0.500 3.800h2.600M0.500 7l2.800-1" fill="none" stroke="#2c3a94" stroke-width="0.900" stroke-linejoin="round"/><circle cx="7.800" cy="6.600" r="2.600" fill="#2c48b0"/><path d="M7.800 5.200v1.500l.9.500" stroke="#cfd6f3" stroke-width="0.500" fill="none"/></svg>
<svg class="abs" style="left:1323px;top:405.5px;" width="2" height="8.4" viewBox="0 0 2 8.400"><circle cx="1" cy="1" r="0.800" fill="#2c3a94"/><circle cx="1" cy="4.200" r="0.800" fill="#2c3a94"/><circle cx="1" cy="7.400" r="0.800" fill="#2c3a94"/></svg>
<svg class="abs" style="left:1273.6px;top:438.29999999999995px;" width="9.4" height="9" viewBox="0 0 9.400 9"><path d="M4.700 0v5.300M2.800 3.400l1.900 2 1.900-2" fill="none" stroke="#3a55c4" stroke-width="1.100"/><path d="M0.500 6.400v0.800c0 .800.500 1.200 1.300 1.200h5.800c.800 0 1.300-.400 1.300-1.200v-0.800" fill="none" stroke="#3a55c4" stroke-width="1"/></svg>
<svg class="abs" style="left:1296px;top:439.1px;" width="10.4" height="9.2" viewBox="0 0 10.400 9.200"><path d="M0.500 7V0.500l6 3M0.500 3.800h2.600M0.500 7l2.800-1" fill="none" stroke="#2c3a94" stroke-width="0.900" stroke-linejoin="round"/><circle cx="7.800" cy="6.600" r="2.600" fill="#2c48b0"/><path d="M7.800 5.200v1.500l.9.500" stroke="#cfd6f3" stroke-width="0.500" fill="none"/></svg>
<svg class="abs" style="left:1323px;top:439.5px;" width="2" height="8.4" viewBox="0 0 2 8.400"><circle cx="1" cy="1" r="0.800" fill="#2c3a94"/><circle cx="1" cy="4.200" r="0.800" fill="#2c3a94"/><circle cx="1" cy="7.400" r="0.800" fill="#2c3a94"/></svg>
<svg class="abs" style="left:1273.6px;top:472.29999999999995px;" width="9.4" height="9" viewBox="0 0 9.400 9"><path d="M4.700 0v5.300M2.800 3.400l1.900 2 1.900-2" fill="none" stroke="#3a55c4" stroke-width="1.100"/><path d="M0.500 6.400v0.800c0 .800.500 1.200 1.300 1.200h5.800c.800 0 1.300-.400 1.300-1.200v-0.800" fill="none" stroke="#3a55c4" stroke-width="1"/></svg>
<svg class="abs" style="left:1296px;top:473.1px;" width="10.4" height="9.2" viewBox="0 0 10.400 9.200"><path d="M0.500 7V0.500l6 3M0.500 3.800h2.600M0.500 7l2.800-1" fill="none" stroke="#2c3a94" stroke-width="0.900" stroke-linejoin="round"/><circle cx="7.800" cy="6.600" r="2.600" fill="#2c48b0"/><path d="M7.800 5.200v1.500l.9.500" stroke="#cfd6f3" stroke-width="0.500" fill="none"/></svg>
<svg class="abs" style="left:1323px;top:473.5px;" width="2" height="8.4" viewBox="0 0 2 8.400"><circle cx="1" cy="1" r="0.800" fill="#2c3a94"/><circle cx="1" cy="4.200" r="0.800" fill="#2c3a94"/><circle cx="1" cy="7.400" r="0.800" fill="#2c3a94"/></svg>
<svg class="abs" style="left:1273.6px;top:506.79999999999995px;" width="9.4" height="9" viewBox="0 0 9.400 9"><path d="M4.700 0v5.300M2.800 3.400l1.900 2 1.900-2" fill="none" stroke="#3a55c4" stroke-width="1.100"/><path d="M0.500 6.400v0.800c0 .800.500 1.200 1.300 1.200h5.800c.800 0 1.300-.400 1.300-1.200v-0.800" fill="none" stroke="#3a55c4" stroke-width="1"/></svg>
<svg class="abs" style="left:1296px;top:507.6px;" width="10.4" height="9.2" viewBox="0 0 10.400 9.200"><path d="M0.500 7V0.500l6 3M0.500 3.800h2.600M0.500 7l2.800-1" fill="none" stroke="#2c3a94" stroke-width="0.900" stroke-linejoin="round"/><circle cx="7.800" cy="6.600" r="2.600" fill="#2c48b0"/><path d="M7.800 5.200v1.500l.9.500" stroke="#cfd6f3" stroke-width="0.500" fill="none"/></svg>
<svg class="abs" style="left:1323px;top:508.0px;" width="2" height="8.4" viewBox="0 0 2 8.400"><circle cx="1" cy="1" r="0.800" fill="#2c3a94"/><circle cx="1" cy="4.200" r="0.800" fill="#2c3a94"/><circle cx="1" cy="7.400" r="0.800" fill="#2c3a94"/></svg>
<svg class="abs" style="left:1273.6px;top:541.3px;" width="9.4" height="9" viewBox="0 0 9.400 9"><path d="M4.700 0v5.300M2.800 3.400l1.900 2 1.900-2" fill="none" stroke="#3a55c4" stroke-width="1.100"/><path d="M0.500 6.400v0.800c0 .800.500 1.200 1.300 1.200h5.800c.800 0 1.300-.400 1.300-1.200v-0.800" fill="none" stroke="#3a55c4" stroke-width="1"/></svg>
<svg class="abs" style="left:1296px;top:542.1px;" width="10.4" height="9.2" viewBox="0 0 10.400 9.200"><path d="M0.500 7V0.500l6 3M0.500 3.800h2.600M0.500 7l2.800-1" fill="none" stroke="#2c3a94" stroke-width="0.900" stroke-linejoin="round"/><circle cx="7.800" cy="6.600" r="2.600" fill="#2c48b0"/><path d="M7.800 5.200v1.500l.9.500" stroke="#cfd6f3" stroke-width="0.500" fill="none"/></svg>
<svg class="abs" style="left:1323px;top:542.5px;" width="2" height="8.4" viewBox="0 0 2 8.400"><circle cx="1" cy="1" r="0.800" fill="#2c3a94"/><circle cx="1" cy="4.200" r="0.800" fill="#2c3a94"/><circle cx="1" cy="7.400" r="0.800" fill="#2c3a94"/></svg>
<svg class="abs" style="left:1297.4px;top:575.9px;" width="9.4" height="9" viewBox="0 0 9.400 9"><path d="M4.700 0v5.300M2.800 3.400l1.900 2 1.900-2" fill="none" stroke="#3a55c4" stroke-width="1.100"/><path d="M0.500 6.400v0.800c0 .800.500 1.200 1.300 1.200h5.800c.800 0 1.300-.400 1.300-1.200v-0.800" fill="none" stroke="#3a55c4" stroke-width="1"/></svg>
<svg class="abs" style="left:1320.1px;top:575.0999999999999px;" width="8.8" height="9.8" viewBox="0 0 8.800 9.800"><path d="M0 1.400h8.800M3 0.400h2.800" stroke="#f0a566" stroke-width="0.900"/><path d="M1.200 1.600v7.600h6.400V1.600" fill="none" stroke="#f0a566" stroke-width="0.900"/><path d="M3.400 3v4.800M5.400 3v4.800" stroke="#f0a566" stroke-width="0.900"/></svg>

<div id="thumb" class="abs"></div>
<div id="chat" class="abs"></div>
<div id="chatb" class="abs"></div>
</body>
</html>
